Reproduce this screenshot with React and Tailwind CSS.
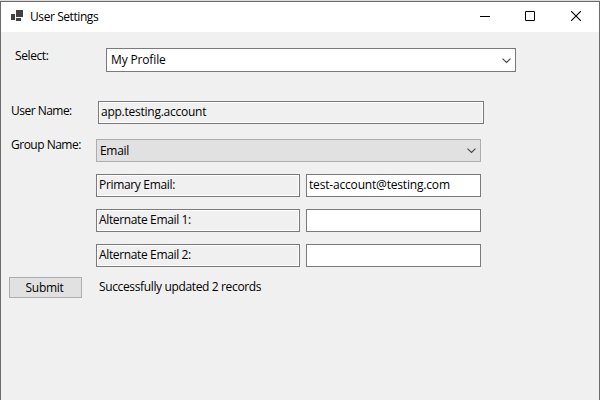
import React from "react";

function Text({ className = "", children }) {
  return (
    <span className={"block h-4 whitespace-nowrap leading-4 " + className}>{children}</span>
  );
}

function Chevron() {
  return (
    <svg width="9" height="6" viewBox="0 0 9 6" fill="none" stroke="#4a4a4a" strokeWidth="1.2">
      <path d="M0.5 0.6 L4.5 4.4 L8.5 0.6" />
    </svg>
  );
}

function TitleBar() {
  return (
    <header className="flex h-[30px] items-start bg-white">
      <svg className="ml-[10px] mt-2" width="12" height="11" viewBox="0 0 12 11" fill="#404040" shapeRendering="crispEdges">
        <path d="M5 0h7v7H5z M0 4h4v6H0z M5 8h5v3H5z" />
      </svg>
      <Text className="ml-[7px] mt-[7px] tracking-[-0.42px]">User Settings</Text>
      <div className="ml-auto mr-[18px] mt-[9px] flex">
        <svg width="10" height="10" viewBox="0 0 10 10" shapeRendering="crispEdges">
          <path d="M0 5h10v1H0z" fill="#000" />
        </svg>
        <svg className="ml-[35px]" width="10" height="10" viewBox="0 0 10 10" fill="none" stroke="#000">
          <path d="M.5 .5h9v9h-9z" />
        </svg>
        <svg className="ml-9" width="10" height="10" viewBox="0 0 10 10" fill="none" stroke="#000" strokeWidth="1.1">
          <path d="M0 0L10 10M10 0L0 10" />
        </svg>
      </div>
    </header>
  );
}

function EmailRow({ label, labelClass, value }) {
  return (
    <div className="flex gap-1.5 pl-[95px]">
      <div className="h-[23px] w-[204px] border border-[#7a7a7a] bg-[#f0f0f0] pl-0.5 pt-0.5 shadow-[inset_0_0_0_1px_#fff]">
        <Text className={labelClass}>{label}</Text>
      </div>
      <div className="h-[23px] w-[175px] border border-[#7a7a7a] bg-white pl-0.5 pt-0.5">
        <Text className="tracking-[-0.18px]">{value}</Text>
      </div>
    </div>
  );
}

export default function App() {
  return (
    <div className="h-[400px] w-[600px] overflow-hidden bg-[#dcdcdc] pt-px font-['Open_Sans',sans-serif] text-[12px] text-black">
      <div className="flex h-[399px] flex-col border-x border-t border-[#6b6b6b] bg-[#f0f0f0]">
        <TitleBar />
        <main className="flex flex-col">
          <div className="mt-4 flex h-6">
            <Text className="ml-[14px] w-[91px] tracking-[-0.4px]">Select:</Text>
            <div className="flex h-6 w-[410px] justify-between border border-[#7a7a7a] bg-white pl-1 pr-1">
              <Text className="mt-[3px] tracking-[-0.15px]">My Profile</Text>
              <div className="mt-[9px]"><Chevron /></div>
            </div>
          </div>
          <div className="mt-[29px] flex h-[23px]">
            <Text className="ml-[10px] mt-[2px] w-[87px] tracking-[-0.52px]">User Name:</Text>
            <div className="h-[23px] w-[386px] border border-[#7a7a7a] bg-[#f0f0f0] pl-0.5 pt-[2px] shadow-[inset_0_0_0_1px_#fff]">
              <Text className="tracking-[-0.25px]">app.testing.account</Text>
            </div>
          </div>
          <div className="mt-[15px] flex h-[23px]">
            <Text className="ml-[10px] mt-[-2px] w-[85px] tracking-[-0.5px]">Group Name:</Text>
            <div className="flex h-[23px] w-[385px] justify-between border border-[#adadad] bg-[#e1e1e1] pl-[3px] pr-1">
              <Text className="mt-[3px] tracking-[-0.3px]">Email</Text>
              <div className="mt-2"><Chevron /></div>
            </div>
          </div>
          <div className="mt-3 flex flex-col gap-3">
            <EmailRow label="Primary Email:" labelClass="tracking-[-0.33px]" value="test-account@testing.com" />
            <EmailRow label="Alternate Email 1:" labelClass="tracking-[-0.36px]" value="" />
            <EmailRow label="Alternate Email 2:" labelClass="tracking-[-0.36px]" value="" />
          </div>
          <div className="mt-[10px] flex">
            <button className="ml-2 flex h-[21px] w-[73px] justify-center border border-[#adadad] bg-[#e1e1e1] pr-0.5">
              <Text className="mt-[2px] tracking-[-0.3px]">Submit</Text>
            </button>
            <Text className="ml-[17px] mt-[2px] tracking-[-0.36px]">Successfully updated 2 records</Text>
          </div>
        </main>
      </div>
    </div>
  );
}
